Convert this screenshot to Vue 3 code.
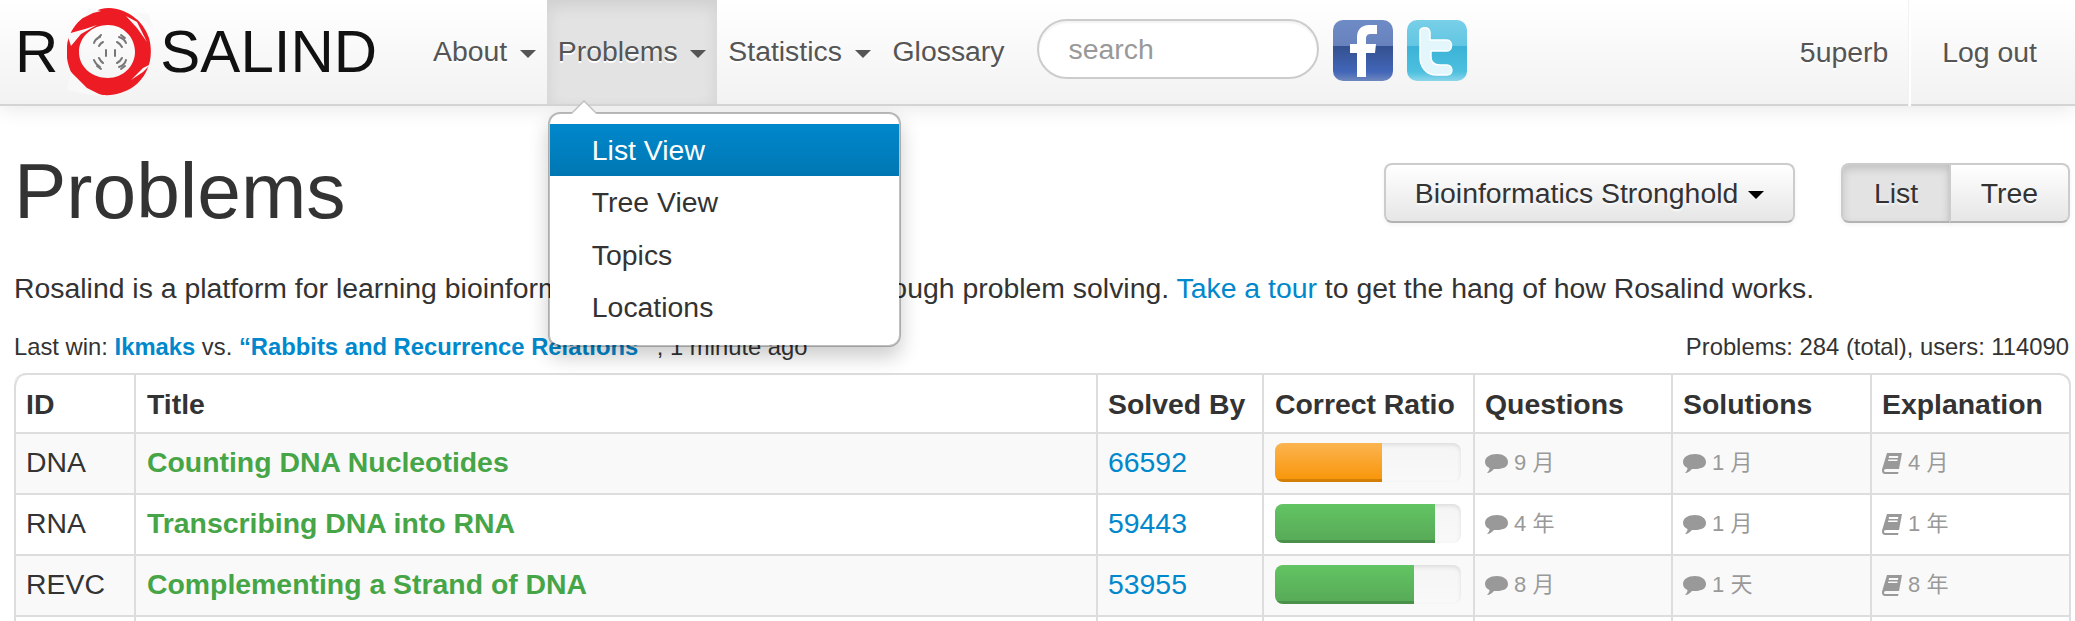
<template>
  <div class="page">
    <header class="navbar">
      <a class="brand">
        <span>R</span>
        <svg class="logo" viewBox="8 6 86 92" width="86" height="92">
          <path fill="#ed1c24" fill-rule="evenodd" d="M50 8C68 9 84 20 90 38C95 56 90 76 74 87C66 92 56 96 44 95C36 94 30 92 25 88C12 78 6 62 8 46C10 26 28 9 50 8ZM49 25C33 25 20 37 20 52C20 67 33 78 49 78C64 78 76 66 76 52C76 37 64 25 49 25Z"/>
          <path fill="#f8f8f8" d="M8 34L26 29L38 25L22 34L12 46ZM67 16L78 22L88 42L78 28ZM92 64L84 72L72 80L84 68ZM12 72L8 90L26 94L44 96L28 88L18 78ZM30 8L42 11L34 13L24 18ZM96 34L88 24L76 12L90 14Z"/>
          <g fill="none" stroke="#777" stroke-width="2" stroke-linecap="round">
            <path d="M35 43C36 40 38 38 41 37M40 46C41 44 42 43 44 42M38 39L42 35"/>
            <path d="M60 37C63 38 66 40 67 43M58 42C60 43 62 45 63 47M62 35L66 38"/>
            <path d="M35 60C36 63 38 65 41 67M40 58C41 60 42 62 44 63M38 66L42 69"/>
            <path d="M60 67C63 66 66 64 67 60M58 63C60 62 62 60 63 58M62 69L66 66"/>
            <path d="M47 50L47 56M56 50L56 56"/>
          </g>
        </svg>
        <span class="brand-rest">SALIND</span>
      </a>
      <ul class="nav">
        <li v-for="item in navItems" :key="item.label" class="nav-item" :class="{ active: item.open }">
          {{ item.label }}<b v-if="item.caret" class="caret"></b>
          <ul v-if="item.open" class="dropdown">
            <li v-for="(sub, i) in dropdownItems" :key="sub" :class="{ selected: i === 0 }">{{ sub }}</li>
          </ul>
        </li>
      </ul>
      <input class="search" type="text" placeholder="search" />
      <svg class="social" viewBox="0 0 62 63" width="62" height="63">
        <defs>
          <linearGradient id="fbg" x1="0" y1="0" x2="0" y2="1">
            <stop offset="0" stop-color="#6f8bc6" />
            <stop offset="0.42" stop-color="#6782bd" />
            <stop offset="0.43" stop-color="#34508f" />
            <stop offset="0.85" stop-color="#4266b8" />
            <stop offset="1" stop-color="#6f88bd" />
          </linearGradient>
        </defs>
        <rect x="1" y="1" width="60" height="61" rx="10" fill="url(#fbg)" />
        <path fill="#fff" d="M34 58V34H43L44 25H34V20C34 16 36 15 39 15H45V6H37C29 6 25 11 25 18V25H18V34H25V58Z" />
      </svg>
      <svg class="social twitter" viewBox="0 0 62 63" width="62" height="63">
        <defs>
          <linearGradient id="twg" x1="0" y1="0" x2="0" y2="1">
            <stop offset="0" stop-color="#78cfe8" />
            <stop offset="0.42" stop-color="#62c6e2" />
            <stop offset="0.43" stop-color="#3bb2d6" />
            <stop offset="0.85" stop-color="#4dc0df" />
            <stop offset="1" stop-color="#8bd6ea" />
          </linearGradient>
        </defs>
        <rect x="1" y="1" width="60" height="61" rx="10" fill="url(#twg)" />
        <path fill="#e2f6fc" stroke="#fff" stroke-width="1.5" d="M14 12C14 8 23 7 24 13V21H41C47 21 47 32 41 32H25V38C25 44 29 46 34 46H41C47 46 48 56 41 56H31C20 56 14 48 14 38Z" />
      </svg>
      <div class="nav-right">
        <span class="user">5uperb</span>
        <span class="divider"></span>
        <span class="logout">Log out</span>
      </div>
    </header>

    <main class="content">
      <div class="heading">
        <h1>Problems</h1>
        <div class="heading-tools">
          <button class="btn track">Bioinformatics Stronghold <b class="caret dark"></b></button>
          <div class="btn-group">
            <button class="btn on">List</button>
            <button class="btn">Tree</button>
          </div>
        </div>
      </div>

      <p class="lead">
        Rosalind is a platform for learning bioinformatics and programming through problem solving.
        <a>Take a tour</a> to get the hang of how Rosalind works.
      </p>

      <div class="status">
        <span>Last win: <a><b>Ikmaks</b></a> vs. <a><b>“Rabbits and Recurrence Relations”</b></a> , 1 minute ago</span>
        <span>Problems: 284 (total), users: 114090</span>
      </div>

      <table>
        <colgroup>
          <col style="width: 120px" />
          <col style="width: 962px" />
          <col style="width: 166px" />
          <col style="width: 211px" />
          <col style="width: 198px" />
          <col style="width: 199px" />
          <col style="width: 199px" />
        </colgroup>
        <thead>
          <tr>
            <th>ID</th>
            <th>Title</th>
            <th>Solved By</th>
            <th>Correct Ratio</th>
            <th>Questions</th>
            <th>Solutions</th>
            <th>Explanation</th>
          </tr>
        </thead>
        <tbody>
          <tr v-for="row in problems" :key="row.id">
            <td>{{ row.id }}</td>
            <td><a class="title-link">{{ row.title }}</a></td>
            <td><a>{{ row.solved }}</a></td>
            <td>
              <div class="progress">
                <div class="bar" :class="row.tone" :style="{ width: row.ratio + '%' }"></div>
              </div>
            </td>
            <td class="meta">
              <svg class="ico" viewBox="0 0 23 20" width="23" height="20"><path fill="#999" d="M12 0C18 0 23 3 23 8C23 13 18 15 12 15C11 15 10 15 9 15C7 17 5 19 2 19C4 17 4.500 15.500 4.500 14C2 13 0 11 0 8C0 3 5 0 12 0Z" /></svg>
              {{ row.questions }}
            </td>
            <td class="meta">
              <svg class="ico" viewBox="0 0 23 20" width="23" height="20"><path fill="#999" d="M12 0C18 0 23 3 23 8C23 13 18 15 12 15C11 15 10 15 9 15C7 17 5 19 2 19C4 17 4.500 15.500 4.500 14C2 13 0 11 0 8C0 3 5 0 12 0Z" /></svg>
              {{ row.solutions }}
            </td>
            <td class="meta">
              <svg class="ico" viewBox="0 0 20 21" width="20" height="21"><path fill="#999" d="M5 0H20L17 16H4C2.500 16 2 17 2 17.500C2 18.500 2.800 19 4 19H16.500L16 21H3C1 21 0 19.500 0 17.500C0 17 0 16.500 0.200 16ZM7 3L6.700 5H16L16.300 3ZM6.300 6.500L6 8H15.400L15.700 6.500Z" /></svg>
              {{ row.explanation }}
            </td>
          </tr>
          <tr class="tail">
            <td v-for="n in 7" :key="n"></td>
          </tr>
        </tbody>
      </table>
    </main>
  </div>
</template>

<script setup>
const navItems = [
  { label: "About", caret: true },
  { label: "Problems", caret: true, open: true },
  { label: "Statistics", caret: true },
  { label: "Glossary" },
];

const dropdownItems = ["List View", "Tree View", "Topics", "Locations"];

const problems = [
  { id: "DNA", title: "Counting DNA Nucleotides", solved: 66592, ratio: 57.6, tone: "orange", questions: "9 月", solutions: "1 月", explanation: "4 月" },
  { id: "RNA", title: "Transcribing DNA into RNA", solved: 59443, ratio: 86, tone: "green", questions: "4 年", solutions: "1 月", explanation: "1 年" },
  { id: "REVC", title: "Complementing a Strand of DNA", solved: 53955, ratio: 74.6, tone: "green", questions: "8 月", solutions: "1 天", explanation: "8 年" },
];
</script>

<style>
html,
body {
  overflow: hidden;
  background: #fff;
}
</style>

<style scoped>
.page {
  font-family: "Liberation Sans", "Noto Sans CJK SC", sans-serif;
  font-size: 28.4px;
  line-height: 40px;
  color: #333;
}

a {
  color: #0088cc;
}

.navbar {
  display: flex;
  align-items: center;
  height: 104px;
  background: linear-gradient(#ffffff, #f2f2f2);
  border-bottom: 2px solid #d4d4d4;
  box-shadow: 0 2px 20px rgba(0, 0, 0, 0.1);
  position: relative;
  z-index: 2;
}

.brand {
  display: flex;
  align-items: center;
  margin-left: 15px;
  font-size: 60px;
  line-height: 60px;
  color: #111;
  height: 104px;
  width: 407px;
  flex: none;
}

.brand span {
  filter: blur(0.5px);
}

.logo {
  margin-left: 9px;
  margin-right: 7px;
  filter: blur(0.6px);
  flex: none;
}

.nav {
  display: flex;
  flex: none;
  list-style: none;
  margin: 0;
  padding: 0;
  height: 104px;
}

.nav-item {
  position: relative;
  padding: 0 11px;
  line-height: 102px;
  color: #555;
  text-shadow: 0 2px 0 #fff;
}

.nav-item.active {
  background: #e3e3e3;
  box-shadow: inset 0 6px 16px rgba(0, 0, 0, 0.09);
}

.caret {
  display: inline-block;
  margin-left: 12.600px;
  vertical-align: middle;
  border-top: 8px solid #555;
  border-left: 8px solid transparent;
  border-right: 8px solid transparent;
}

.caret.dark {
  margin-left: 2px;
  border-top-color: #000;
}

.dropdown {
  position: absolute;
  top: 112px;
  left: 1px;
  width: 353px;
  box-sizing: border-box;
  margin: 0;
  padding: 10px 0 12px;
  list-style: none;
  background: #fff;
  border: 2px solid rgba(0, 0, 0, 0.25);
  border-radius: 12px;
  background-clip: padding-box;
  box-shadow: 0 10px 20px rgba(0, 0, 0, 0.2);
  text-shadow: none;
  line-height: 52px;
  z-index: 5;
}

.dropdown::before {
  content: "";
  position: absolute;
  left: 20px;
  top: -14px;
  border-left: 14px solid transparent;
  border-right: 14px solid transparent;
  border-bottom: 14px solid #c0c0c0;
}

.dropdown::after {
  content: "";
  position: absolute;
  left: 22px;
  top: -12px;
  border-left: 12px solid transparent;
  border-right: 12px solid transparent;
  border-bottom: 12px solid #fff;
}

.dropdown li {
  height: 52px;
  line-height: 52px;
  padding-left: 42px;
  color: #333;
}

.dropdown li + li {
  margin-top: 0.4px;
}

.dropdown li.selected {
  color: #fff;
  background: linear-gradient(#0088cc, #0077b3);
}

.search {
  flex: none;
  width: 282px;
  height: 60px;
  box-sizing: border-box;
  margin: -6px 0 0 21px;
  padding: 0 30px;
  border: 2px solid #ccc;
  border-radius: 30px;
  background: #fff;
  font: 28.4px "Liberation Sans", sans-serif;
  color: #555;
  outline: none;
  box-shadow: inset 0 2px 2px rgba(0, 0, 0, 0.05);
}

.search::placeholder {
  color: #999;
  opacity: 1;
}

.social {
  margin: -3px 0 0 13px;
  flex: none;
  filter: blur(0.5px);
}

.twitter {
  margin-left: 12px;
}

.nav-right {
  display: flex;
  align-items: center;
  margin-left: auto;
  height: 104px;
  color: #555;
  text-shadow: 0 2px 0 #fff;
}

.user {
  margin-right: 20px;
}

.divider {
  width: 2px;
  height: 106px;
  align-self: flex-start;
  background: #fff;
  border-left: 1px solid #f2f2f2;
}

.logout {
  margin: 0 38px 0 31px;
}

.content {
  padding: 0 6px 0 15px;
}

.heading {
  display: flex;
  justify-content: space-between;
  align-items: flex-start;
  height: 150px;
}

h1 {
  margin: 45px 0 0 -1px;
  font-size: 78.5px;
  line-height: 80px;
  font-weight: normal;
}

.heading-tools {
  display: flex;
  gap: 46px;
  margin-top: 57px;
  margin-right: -1px;
}

.btn {
  height: 60px;
  box-sizing: border-box;
  padding: 0 24px;
  font: 28.4px "Liberation Sans", sans-serif;
  color: #333;
  background: linear-gradient(#ffffff, #e6e6e6);
  border: 2px solid #ccc;
  border-bottom-color: #b3b3b3;
  border-radius: 8px;
  box-shadow: inset 0 2px 0 rgba(255, 255, 255, 0.2), 0 2px 4px rgba(0, 0, 0, 0.05);
  text-shadow: 0 2px 2px rgba(255, 255, 255, 0.75);
}

.btn.track {
  width: 411px;
  padding: 0;
}

.btn-group {
  display: flex;
}

.btn-group .btn {
  width: 110px;
  padding: 0;
  border-radius: 8px 0 0 8px;
}

.btn-group .btn + .btn {
  width: 121px;
  margin-left: -2px;
  border-radius: 0 8px 8px 0;
}

.btn.on {
  background: #e3e3e3;
  box-shadow: inset 0 4px 8px rgba(0, 0, 0, 0.15), 0 2px 4px rgba(0, 0, 0, 0.05);
}

.lead {
  height: 40px;
  margin: 12px 0 0 -1px;
}

.status {
  display: flex;
  justify-content: space-between;
  margin: 24px 0 11px -1px;
  font-size: 23.800px;
  line-height: 30px;
}

table {
  width: 2055px;
  margin-left: -1px;
  table-layout: fixed;
  border-collapse: separate;
  border-spacing: 0;
  border-top: 2px solid #ddd;
  border-right: 2px solid #ddd;
  border-radius: 12px 12px 0 0;
}

th,
td {
  height: 59px;
  padding: 0 10px;
  text-align: left;
  border-left: 2px solid #ddd;
  border-bottom: 2px solid #ddd;
  vertical-align: middle;
}

td {
  padding-bottom: 3px;
  height: 56px;
}

td.meta {
  padding-bottom: 1px;
  height: 58px;
}

th {
  height: 57px;
  font-weight: bold;
}

th:first-child {
  border-top-left-radius: 12px;
}

th:last-child {
  border-top-right-radius: 12px;
}

th:nth-child(2),
td:nth-child(2),
th:nth-child(4),
td:nth-child(4) {
  padding-left: 11px;
}

tbody tr:nth-child(odd) td {
  background: #f9f9f9;
}

.tail td {
  height: 5px;
  padding: 0;
  border-bottom: 0;
}

.title-link {
  color: #46a546;
  font-weight: bold;
}

.progress {
  height: 39px;
  width: 186px;
  border-radius: 8px;
  overflow: hidden;
  background: linear-gradient(#f5f5f5, #f9f9f9);
  box-shadow: inset 0 2px 4px rgba(0, 0, 0, 0.1);
}

.bar {
  height: 100%;
  box-shadow: inset 0 -3px 0 rgba(0, 0, 0, 0.15);
}

.bar.orange {
  background: linear-gradient(#fbb450, #f89406);
}

.bar.green {
  background: linear-gradient(#62c462, #57a957);
}

.meta {
  font-size: 22px;
  color: #999;
}

.ico {
  vertical-align: -4px;
}
</style>
